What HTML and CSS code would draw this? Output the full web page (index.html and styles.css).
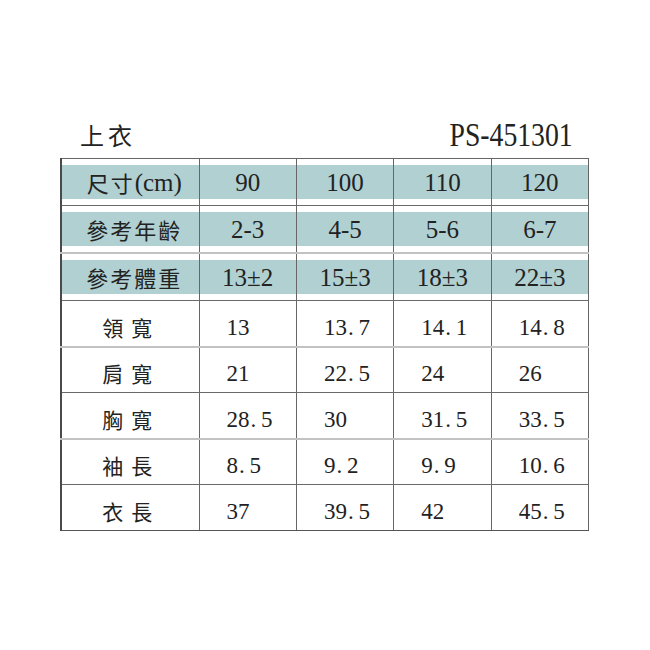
FILE: index.html
```html
<!DOCTYPE html>
<html lang="zh-Hant">
<head>
<meta charset="utf-8">
<title>上衣 PS-451301</title>
<link rel="stylesheet" href="styles.css">
</head>
<body>
<div class="sheet">
  <div class="head">
    <span class="title">上衣</span>
    <span class="code">PS-451301</span>
  </div>
  <table class="size">
    <colgroup>
      <col class="c-label"><col><col><col><col>
    </colgroup>
    <tbody>
      <tr class="h h1">
        <td><div class="band lab">尺寸<span class="lat">(cm)</span></div></td>
        <td><div class="band">90</div></td>
        <td><div class="band">100</div></td>
        <td><div class="band">110</div></td>
        <td><div class="band">120</div></td>
      </tr>
      <tr class="h h2">
        <td><div class="band lab">參考年齡</div></td>
        <td><div class="band">2-3</div></td>
        <td><div class="band">4-5</div></td>
        <td><div class="band">5-6</div></td>
        <td><div class="band">6-7</div></td>
      </tr>
      <tr class="h h3">
        <td><div class="band lab">參考體重</div></td>
        <td><div class="band">13±2</div></td>
        <td><div class="band">15±3</div></td>
        <td><div class="band">18±3</div></td>
        <td><div class="band">22±3</div></td>
      </tr>
      <tr class="b light">
        <td class="name">領寬</td>
        <td>13</td>
        <td>13<span class="dot">.</span>7</td>
        <td>14<span class="dot">.</span>1</td>
        <td>14<span class="dot">.</span>8</td>
      </tr>
      <tr class="b">
        <td class="name">肩寬</td>
        <td>21</td>
        <td>22<span class="dot">.</span>5</td>
        <td>24</td>
        <td>26</td>
      </tr>
      <tr class="b light">
        <td class="name">胸寬</td>
        <td>28<span class="dot">.</span>5</td>
        <td>30</td>
        <td>31<span class="dot">.</span>5</td>
        <td>33<span class="dot">.</span>5</td>
      </tr>
      <tr class="b">
        <td class="name">袖長</td>
        <td>8<span class="dot">.</span>5</td>
        <td>9<span class="dot">.</span>2</td>
        <td>9<span class="dot">.</span>9</td>
        <td>10<span class="dot">.</span>6</td>
      </tr>
      <tr class="b last">
        <td class="name">衣長</td>
        <td>37</td>
        <td>39<span class="dot">.</span>5</td>
        <td>42</td>
        <td>45<span class="dot">.</span>5</td>
      </tr>
    </tbody>
  </table>
</div>
</body>
</html>
```
FILE: styles.css
```css
html, body {
  margin: 0;
  padding: 0;
  background: #ffffff;
}

body {
  font-family: "Liberation Serif", "Noto Sans CJK TC", serif;
  color: #222222;
}

.sheet {
  width: 529px;
  padding: 112px 0 0 60px;
}

.head {
  display: flex;
  justify-content: space-between;
  align-items: center;
  height: 46px;
  padding: 0 16px 0 20px;
}

.title {
  font-family: "Noto Sans CJK TC", sans-serif;
  font-size: 24px;
  letter-spacing: 4px;
  font-weight: 400;
  line-height: 1;
}

.code {
  display: inline-block;
  font-size: 33px;
  line-height: 1;
  transform: scaleX(0.84);
  transform-origin: right center;
}

.size {
  width: 529px;
  table-layout: fixed;
  border-collapse: collapse;
  border-left: 2px solid #4a4a4a;
  border-right: 1px solid #555555;
  border-top: 1px solid #666666;
}

.c-label {
  width: 138px;
}

.size td {
  padding: 0;
  border-left: 1px solid #666666;
  border-right: 1px solid #666666;
}

/* header rows with inset teal band */
.h td {
  height: 34px;
  padding: 6px 0 6px;
  vertical-align: middle;
}

.h1 td { border-bottom: 1px solid #6a6a6a; }
.h2 td { border-bottom: 2px solid #c2c2c2; }
.h3 td { border-bottom: 1px solid #6a6a6a; }

.band {
  height: 34px;
  background: #b0d0d2;
  display: flex;
  align-items: center;
  justify-content: center;
  font-size: 25px;
  line-height: 1;
}

.band.lab {
  font-family: "Noto Sans CJK TC", sans-serif;
  font-size: 22px;
  letter-spacing: 2px;
  padding-left: 8px;
}

.band.lab .lat {
  font-family: "Liberation Serif", serif;
  font-size: 25px;
  letter-spacing: 0;
}

/* body rows */
.b td {
  height: 46px;
  box-sizing: border-box;
  padding: 8px 0 0 27px;
  vertical-align: middle;
  font-size: 23px;
  line-height: 1;
  border-bottom: 1px solid #6a6a6a;
}

.b.light td {
  border-bottom: 2px solid #c2c2c2;
}

.b.last td {
  border-bottom: 1px solid #555555;
}

.b td.name {
  padding-left: 0;
  text-align: center;
  font-family: "Noto Sans CJK TC", sans-serif;
  font-size: 21px;
  letter-spacing: 8px;
  text-indent: 2px;
}

.dot {
  display: inline-block;
  width: 0.5em;
  text-align: left;
  padding-left: 1px;
  box-sizing: border-box;
}
```
